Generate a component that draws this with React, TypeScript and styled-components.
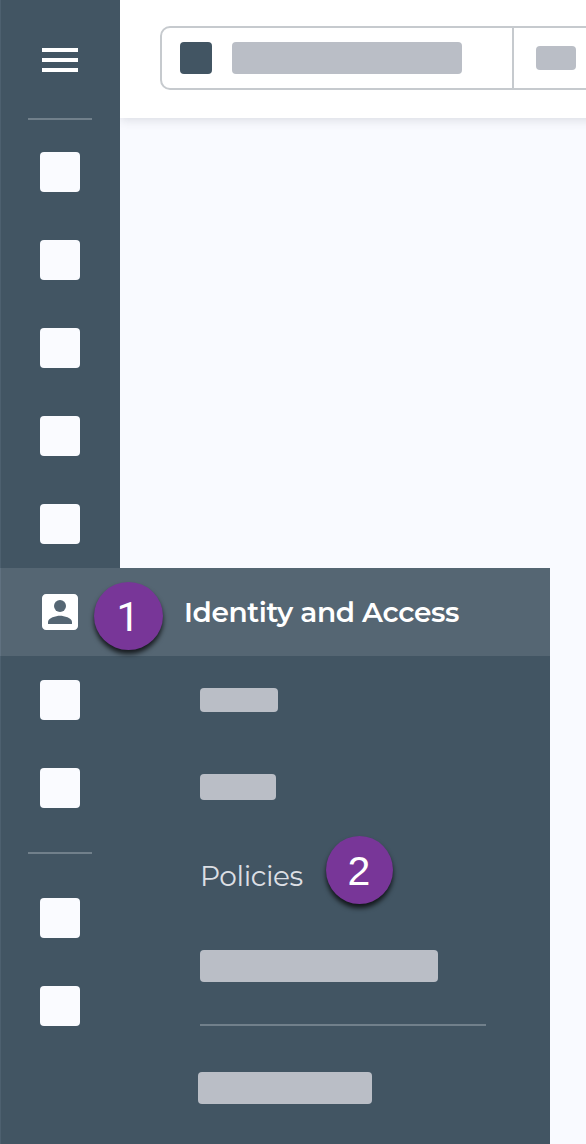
import React from "react";
import styled, { createGlobalStyle } from "styled-components";

const GlobalStyle = createGlobalStyle`
  *, *::before, *::after { box-sizing: border-box; }
  body { margin: 0; background: #f9faff; overflow: hidden; }
`;

const Page = styled.div`
  display: flex;
  flex-direction: column;
  width: 586px;
  height: 1144px;
  overflow: hidden;
  background: #f9faff;
  font-family: Montserrat, Inter, sans-serif;
`;

const Upper = styled.div`
  display: flex;
  height: 568px;
`;

const Rail = styled.nav<{ $top: number }>`
  display: flex;
  flex-direction: column;
  align-items: center;
  flex: 0 0 120px;
  padding-top: ${(p) => p.$top}px;
  background: #425563;
  box-shadow: inset 1px 0 #4d606f;
`;

const MenuButton = styled.div`
  display: flex;
  flex-direction: column;
  gap: 6px;
  width: 36px;
  margin-bottom: 46px;
`;

const MenuLine = styled.span`
  height: 4px;
  background: #fff;
`;

const RailDivider = styled.hr`
  width: 64px;
  height: 2px;
  margin: 0;
  border: 0;
  background: #71808b;
`;

const RailGroup = styled.div<{ $top: number; $bottom?: number }>`
  display: flex;
  flex-direction: column;
  gap: 48px;
  padding: ${(p) => p.$top}px 0 ${(p) => p.$bottom ?? 0}px;
`;

const RailItem = styled.div`
  width: 40px;
  height: 40px;
  border-radius: 4px;
  background: #fafbff;
`;

const Main = styled.main`
  flex: 1;
  min-width: 0;
  overflow: hidden;
`;

const Header = styled.header`
  width: 500px;
  height: 118px;
  padding: 26px 0 0 40px;
  background: #fff;
  box-shadow: 0 2px 10px rgba(66, 70, 85, 0.17);
  overflow: hidden;
`;

const SearchBar = styled.div`
  display: flex;
  width: 500px;
  height: 64px;
  border: 2px solid #c6cace;
  border-radius: 10px;
`;

const SearchScope = styled.div`
  display: flex;
  align-items: center;
  gap: 20px;
  width: 352px;
  padding-left: 18px;
  border-right: 2px solid #c6cace;
`;

const SearchFilter = styled.div`
  display: flex;
  align-items: center;
  padding-left: 22px;
`;

const Logo = styled.div`
  width: 32px;
  height: 32px;
  border-radius: 4px;
  background: #425563;
`;

const Placeholder = styled.div<{ $w: number; $h: number }>`
  flex: none;
  width: ${(p) => p.$w}px;
  height: ${(p) => p.$h}px;
  border-radius: 4px;
  background: #babec6;
`;

const ActiveRow = styled.div`
  position: relative;
  display: flex;
  align-items: center;
  width: 550px;
  height: 88px;
  flex: none;
  background: #556673;
  box-shadow: inset 1px 0 #607180;
`;

const ActiveIcon = styled.div`
  display: flex;
  justify-content: center;
  width: 120px;
  margin-right: 64px;
`;

const ActiveLabel = styled.span`
  color: #fff;
  font-size: 28px;
  font-weight: 600;
  line-height: 34px;
  letter-spacing: -0.36px;
  white-space: nowrap;
`;

const Lower = styled.div`
  display: flex;
  width: 550px;
  flex: 1;
  background: #425563;
`;

const Submenu = styled.div`
  display: flex;
  flex-direction: column;
  flex: 1;
  padding: 32px 0 0 80px;
`;

const SubmenuItem = styled.div<{ $gap: number; $shift?: number }>`
  position: relative;
  display: flex;
  align-items: center;
  margin: 0 0 ${(p) => p.$gap}px ${(p) => p.$shift ?? 0}px;
`;

const SubmenuLabel = styled.span`
  color: #dcdfe4;
  font-size: 28px;
  font-weight: 400;
  line-height: 34px;
  letter-spacing: -0.4px;
`;

const SubmenuDivider = styled.hr`
  width: 286px;
  height: 2px;
  margin: 0 0 46px;
  border: 0;
  background: #71808b;
`;

const Badge = styled.span<{ $x: number; $y: number; $w: number; $face: string }>`
  position: absolute;
  left: ${(p) => p.$x}px;
  top: ${(p) => p.$y}px;
  display: flex;
  align-items: center;
  justify-content: center;
  width: ${(p) => p.$w}px;
  height: 68px;
  padding: 2px 1px 0 0;
  border-radius: 50%;
  background: #783698;
  box-shadow: 0 4px 5px rgba(0, 0, 0, 0.75);
  color: #fff;
  font: 41px/66px ${(p) => p.$face}, Arial, sans-serif;
  z-index: 1;
`;

const AccountIcon = () => (
  <svg width="48" height="48" viewBox="0 0 24 24" fill="#fff">
    <path d="M19 3H5c-1.1 0-2 .9-2 2v14c0 1.1.9 2 2 2h14c1.1 0 2-.9 2-2V5c0-1.1-.9-2-2-2z" />
    <circle cx="12" cy="9" r="3" fill="#556673" />
    <path d="M18 18H6v-1c0-2 4-3.1 6-3.1s6 1.1 6 3.1v1z" fill="#556673" />
  </svg>
);

const items = (count: number) =>
  Array.from({ length: count }, (_, i) => <RailItem key={i} />);

export default function App() {
  return (
    <>
      <GlobalStyle />
      <Page>
        <Upper>
          <Rail $top={48}>
            <MenuButton>
              <MenuLine />
              <MenuLine />
              <MenuLine />
            </MenuButton>
            <RailDivider />
            <RailGroup $top={32}>{items(5)}</RailGroup>
          </Rail>
          <Main>
            <Header>
              <SearchBar>
                <SearchScope>
                  <Logo />
                  <Placeholder $w={230} $h={32} />
                </SearchScope>
                <SearchFilter>
                  <Placeholder $w={40} $h={24} />
                </SearchFilter>
              </SearchBar>
            </Header>
          </Main>
        </Upper>
        <ActiveRow>
          <ActiveIcon>
            <AccountIcon />
          </ActiveIcon>
          <ActiveLabel>Identity and Access</ActiveLabel>
          <Badge $x={94} $y={14} $w={69} $face="Roboto">1</Badge>
        </ActiveRow>
        <Lower>
          <Rail $top={0}>
            <RailGroup $top={24} $bottom={44}>{items(2)}</RailGroup>
            <RailDivider />
            <RailGroup $top={44}>{items(2)}</RailGroup>
          </Rail>
          <Submenu>
            <SubmenuItem $gap={62}>
              <Placeholder $w={78} $h={24} />
            </SubmenuItem>
            <SubmenuItem $gap={59}>
              <Placeholder $w={76} $h={26} />
            </SubmenuItem>
            <SubmenuItem $gap={57}>
              <SubmenuLabel>Policies</SubmenuLabel>
              <Badge $x={126} $y={-23} $w={67} $face="'Liberation Sans'">2</Badge>
            </SubmenuItem>
            <SubmenuItem $gap={42}>
              <Placeholder $w={238} $h={32} />
            </SubmenuItem>
            <SubmenuDivider />
            <SubmenuItem $gap={0} $shift={-2}>
              <Placeholder $w={174} $h={32} />
            </SubmenuItem>
          </Submenu>
        </Lower>
      </Page>
    </>
  );
}
